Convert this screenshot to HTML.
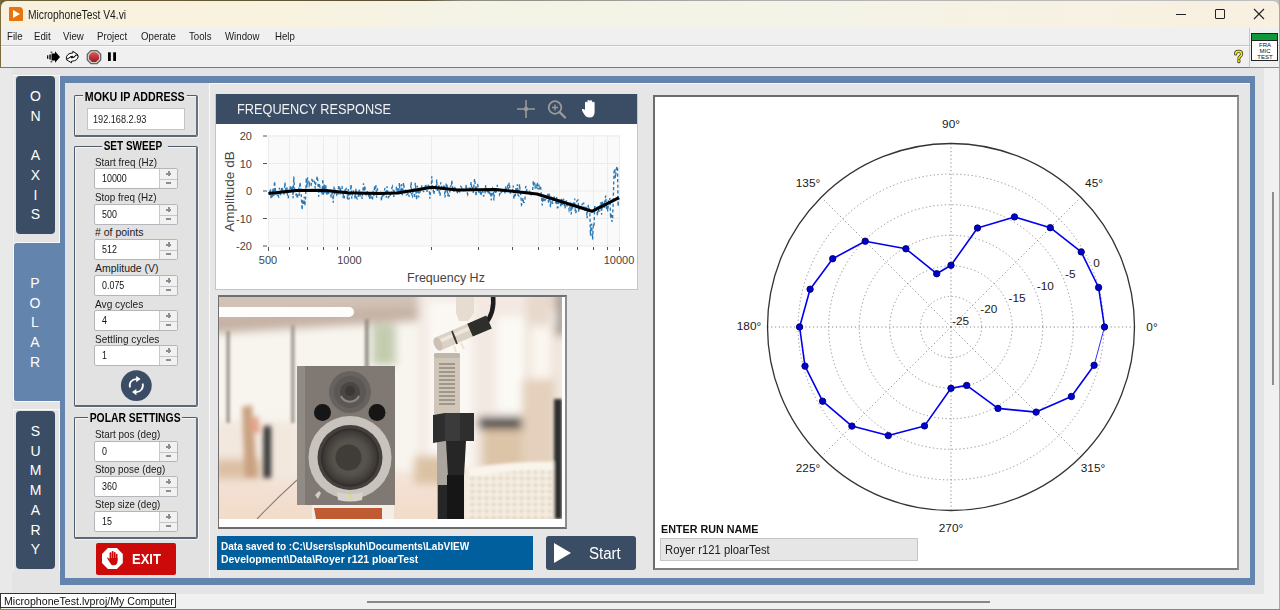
<!DOCTYPE html>
<html><head><meta charset="utf-8">
<style>
*{box-sizing:border-box;margin:0;padding:0}
html,body{width:1280px;height:610px;overflow:hidden;background:#7b6a3c;font-family:"Liberation Sans",sans-serif}
.a{position:absolute}
.tx{transform-origin:0 0}
#win{left:0;top:0;width:1280px;height:610px;background:#f0f0f0;overflow:hidden}
#title{left:1px;top:1px;width:1278px;height:27px;background:linear-gradient(90deg,#f8f1df 0%,#f9f2de 20%,#f4f3e5 34%,#f3f3e7 62%,#f6f2e3 80%,#f8f0e0 100%);border-radius:6px 6px 0 0}
#menu{left:1px;top:28px;width:1278px;height:17px;background:#f0f0f0}
.mi{position:absolute;top:30px;font-size:11.5px;transform:scaleX(0.84);transform-origin:0 0;color:#1a1a1a;white-space:nowrap}
#tb{left:1px;top:45px;width:1278px;height:22px;background:#f0f0f0;border-top:1px solid #c6c6c6;box-shadow:inset 0 1px 0 #fafafa}
#mainbg{left:0;top:67px;width:1264px;height:527px;background:linear-gradient(90deg,#e9e9e9 0,#e9e9e9 11px,#e4e4e4 13px,#e4e4e4 100%);border-top:1px solid #7a7a7a}
.tab{position:absolute;background:#3b4d64;border-radius:4px;color:#fff;font-size:14px;text-align:center;line-height:19.7px}
#frame{left:60px;top:76px;width:1195px;height:509px;background:#6384ad}
.pnl{position:absolute;background:#e6e6e6}
.gb{position:absolute;border:1px solid #4e5c6c;border-right:2px solid #66727e;border-bottom:2px solid #5c6876;border-radius:2px;box-shadow:inset 1px 1px 0 #f6f6f6,1px 1px 0 #f4f4f4}
.gbt{position:absolute;font-weight:bold;font-size:12px;color:#000;background:#e2e2e2;padding:0 2px;white-space:nowrap}
.lbl{position:absolute;font-size:10.5px;transform:scaleX(0.94);transform-origin:0 0;color:#1a1a1a;white-space:nowrap}
.num{position:absolute;width:84px;height:21px;background:#fff;border:1px solid #b4b6bc;border-radius:2px}
.num .v{position:absolute;left:6px;top:2px;font-size:11px;color:#111;transform:scaleX(0.81);margin:1px 0 0 1px;transform-origin:0 0}
.num .inc{position:absolute;left:64px;top:0;width:18px;height:19px;background:#f1f1f1;border-left:1px solid #c8c8c8}
.num .inc:before{content:"";position:absolute;left:5.5px;top:3.7px;width:5px;height:2px;background:#8e8e8e;box-shadow:0 0 0 0 #7c7c7c}
.num .inc:after{content:"";position:absolute;left:5.5px;top:13.1px;width:5px;height:2px;background:#8e8e8e}
.num .sep{position:absolute;left:65px;top:9.5px;width:17px;height:1.5px;background:#c4c6cc}
.num .vp{position:absolute;left:72.5px;top:2.2px;width:2px;height:5px;background:#8e8e8e}
svg text{font-family:"Liberation Sans",sans-serif}
</style></head><body>
<div id="win" class="a">
  <div class="a" style="left:0;top:0;width:1280px;height:30px;background:linear-gradient(90deg,#6e6036 0%,#5a5032 33%,#8c8a80 36%,#b0b0b0 60%,#c0c0c0 100%)"></div><div class="a" style="left:0;top:0;width:1px;height:610px;background:#7b6a3c"></div><div class="a" style="left:1279px;top:0;width:1px;height:610px;background:#a8a8a8"></div>
  <div id="title" class="a">
    <div class="a" style="left:8px;top:6px;width:14px;height:14px;background:#e8730f;border-radius:1px 4px 1px 1px"></div>
    <svg class="a" style="left:8px;top:6px" width="14" height="14"><path d="M4 3 L11 7 L4 11 Z" fill="#fff"/></svg>
    <div id="t_title" class="a tx" style="left:27px;top:7px;transform:scaleX(0.855);font-size:12px;color:#1a1a1a;white-space:nowrap">MicrophoneTest V4.vi</div>
    <div class="a" style="left:1175px;top:13px;width:10px;height:1px;background:#222"></div>
    <div class="a" style="left:1214px;top:8px;width:10px;height:10px;border:1px solid #222;border-radius:1px"></div>
    <svg class="a" style="left:1252px;top:7px" width="12" height="12"><path d="M1 1 L11 11 M11 1 L1 11" stroke="#222" stroke-width="1.1"/></svg>
  </div>
  <div id="menu" class="a"></div>
  <div id="t_file" class="mi tx" style="left:7px">File</div>
  <div class="mi" style="left:34px">Edit</div>
  <div class="mi" style="left:63px">View</div>
  <div class="mi" style="left:97px">Project</div>
  <div class="mi" style="left:141px">Operate</div>
  <div class="mi" style="left:189px">Tools</div>
  <div class="mi" style="left:225px">Window</div>
  <div id="t_help" class="mi tx" style="left:275px">Help</div>
  <div id="tb" class="a"></div>
  <!-- toolbar icons -->
  <svg class="a" style="left:40px;top:45px" width="85" height="23" viewBox="40 45 85 23">
    <path d="M51.5 53.5 H55 V51.3 L60 57 L55 62.8 V60.5 H51.5 Z" fill="#000"/>
    <rect x="47" y="55.3" width="1.3" height="3.5" fill="#111"/><rect x="49.3" y="54.5" width="1.5" height="5" fill="#111"/>
    <rect x="50.6" y="51.5" width="1.6" height="1.5" fill="#555"/><rect x="50.6" y="61" width="1.6" height="1.5" fill="#555"/>
    <path d="M66.3 58.5 Q66.5 53.2 72.8 53 V51.3 L77.8 54.6 L72.8 57.8 V56.2 Q69.2 56.4 68.8 59.5 Z" fill="#fff" stroke="#000" stroke-width="0.95" stroke-linejoin="round"/>
    <path d="M78.3 55.8 Q78 61 71.5 61.2 V62.8 L66.3 59.6 L71.5 56.4 V58 Q75.2 57.9 75.8 54.8 Z" fill="#fff" stroke="#000" stroke-width="0.95" stroke-linejoin="round"/>
    <defs><linearGradient id="abg" x1="0" y1="0" x2="0" y2="1"><stop offset="0" stop-color="#d4585c"/><stop offset="0.5" stop-color="#c03438"/><stop offset="1" stop-color="#9c1c20"/></linearGradient></defs>
    <path d="M91 50.6 H97 L100.7 54.3 V59.9 L97 63.6 H91 L87.3 59.9 V54.3 Z" fill="#cfcfcf" stroke="#666" stroke-width="1.3"/>
    <path d="M92 52.3 H96 L99 55.3 V58.9 L96 61.9 H92 L89 58.9 V55.3 Z" fill="url(#abg)"/>
    <rect x="108" y="52.3" width="2.8" height="8.7" fill="#000"/><rect x="113.2" y="52.3" width="2.8" height="8.7" fill="#000"/>
  </svg>
  <div class="a" style="left:1249px;top:28px;width:1px;height:40px;background:#c8c8c8"></div>
  <div class="a" style="left:1251px;top:33px;width:27px;height:28px;background:#fff;border:1px solid #222">
    <div class="a" style="left:0;top:0;width:25px;height:6.5px;background:#0c9a38;border-bottom:1px solid #222"></div>
    <div class="a" style="left:0;top:8px;width:26px;font-size:6px;line-height:6px;text-align:center;font-weight:normal;color:#111;font-family:'Liberation Sans',sans-serif">FRA<br>MIC<br>TEST</div>
  </div>
  <svg class="a" style="left:1232px;top:49px" width="13" height="15"><path d="M3.6 5 Q3.6 2.4 6.6 2.4 Q9.6 2.4 9.6 5 Q9.6 6.7 7.9 7.6 Q6.9 8.2 6.9 9.7 M6.9 11.6 V12.7" fill="none" stroke="#333" stroke-width="3.1" stroke-linecap="round"/><path d="M3.6 5 Q3.6 2.4 6.6 2.4 Q9.6 2.4 9.6 5 Q9.6 6.7 7.9 7.6 Q6.9 8.2 6.9 9.7 M6.9 11.6 V12.7" fill="none" stroke="#f4ec00" stroke-width="1.6" stroke-linecap="round"/></svg>

  <div id="mainbg" class="a"></div>
  <div class="a" style="left:1264px;top:68px;width:15px;height:527px;background:#f0f0f0"></div><div class="a" style="left:1249px;top:67px;width:30px;height:1px;background:#8a8a8a"></div>
  <div class="a" style="left:1272px;top:192px;width:1.5px;height:193px;background:#8e8e8e"></div>
  <div class="a" style="left:1px;top:594px;width:1278px;height:15px;background:#f0f0f0"></div><div class="a" style="left:0;top:609px;width:1280px;height:1px;background:#8c8878"></div>
  <div class="a" style="left:367px;top:601px;width:623px;height:2px;background:#888"></div>

  <!-- tabs -->
  <div class="a" style="left:13px;top:75px;width:47px;height:167px;border:1px solid #f8f8f8;border-bottom:none;border-left-color:#f2f2f2"></div>
  <div id="t_tab1" class="tab tx" style="left:16px;top:76px;width:39px;height:158px;padding-top:11px">O<br>N<br>&nbsp;<br>A<br>X<br>I<br>S</div>
  <div class="a" style="left:13px;top:242px;width:52px;height:160px;background:#f8f8f8;border-radius:4px 0 0 3px"></div>
  <div id="t_tab2" class="tab tx" style="left:14px;top:243px;width:51px;height:158px;background:#6384ad;border-radius:3px 0 0 2px;padding-top:31px;padding-right:9px">P<br>O<br>L<br>A<br>R</div>
  <div class="a" style="left:13px;top:409px;width:47px;height:162px;border:1px solid #f8f8f8;border-bottom:none;border-left-color:#f2f2f2"></div>
  <div id="t_tab3" class="tab tx" style="left:16px;top:411px;width:39px;height:158px;padding-top:11px">S<br>U<br>M<br>M<br>A<br>R<br>Y</div>

  <!-- blue frame -->
  <div id="frame" class="a"></div>
  <div class="pnl" style="left:65px;top:83px;width:1185px;height:495px;background:#e6e6e6;border-top:1px solid #f6f6f6;border-left:1px solid #f6f6f6"></div>
  <!-- left panel -->
  <div class="pnl" style="left:65px;top:83px;width:145px;height:495px;background:#e2e2e2;border-right:1px solid #fafafa"></div>

  <div class="gb" style="left:74px;top:95px;width:124px;height:42px"></div>
  <div id="t_moku" class="gbt tx" style="left:83px;top:90px;transform:scaleX(0.887)">MOKU IP ADDRESS</div>
  <div class="a" style="left:87px;top:108px;width:98px;height:22px;background:#fff;border:1px solid #c4c4c4"></div>
  <div id="t_ip" class="lbl tx" style="left:93px;top:114px;font-size:10px;transform:scaleX(0.914)">192.168.2.93</div>

  <div class="gb" style="left:74px;top:146px;width:124px;height:261px"></div>
  <div id="t_sweep" class="gbt tx" style="left:102px;top:139px;transform:scaleX(0.834);padding-right:7px">SET SWEEP</div>

  <div id="t_startf" class="lbl tx" style="left:95px;top:156px">Start freq (Hz)</div>
  <div class="num" style="left:94px;top:168px"><div id="t_10000" class="v tx">10000</div><div class="inc"></div><div class="sep"></div><div class="vp"></div></div>
  <div id="l_stopf" class="lbl tx" style="left:95px;top:191px">Stop freq (Hz)</div>
  <div class="num" style="left:94px;top:204px"><div class="v">500</div><div class="inc"></div><div class="sep"></div><div class="vp"></div></div>
  <div id="l_pts" class="lbl tx" style="left:95px;top:226px;transform:scaleX(1.0)"># of points</div>
  <div class="num" style="left:94px;top:239px"><div class="v">512</div><div class="inc"></div><div class="sep"></div><div class="vp"></div></div>
  <div id="l_amp" class="lbl tx" style="left:95px;top:262px;transform:scaleX(1.0)">Amplitude (V)</div>
  <div class="num" style="left:94px;top:275px"><div class="v">0.075</div><div class="inc"></div><div class="sep"></div><div class="vp"></div></div>
  <div id="l_avg" class="lbl tx" style="left:95px;top:298px;transform:scaleX(0.964)">Avg cycles</div>
  <div class="num" style="left:94px;top:310px"><div class="v">4</div><div class="inc"></div><div class="sep"></div><div class="vp"></div></div>
  <div id="l_set" class="lbl tx" style="left:95px;top:333px;transform:scaleX(0.958)">Settling cycles</div>
  <div class="num" style="left:94px;top:345px"><div class="v">1</div><div class="inc"></div><div class="sep"></div><div class="vp"></div></div>

  <svg class="a" style="left:120px;top:369px" width="33" height="33">
    <circle cx="16.3" cy="16.6" r="15.4" fill="#3b4d64"/>
    <path d="M10 18.6 A6.5 6.5 0 0 1 16.6 10.1" fill="none" stroke="#fff" stroke-width="1.7"/>
    <path d="M16.2 7 L20.6 10.1 L16.2 13.2 Z" fill="#fff"/>
    <path d="M22.6 14.6 A6.5 6.5 0 0 1 16 23.1" fill="none" stroke="#fff" stroke-width="1.7"/>
    <path d="M16.4 20 L12 23.1 L16.4 26.2 Z" fill="#fff"/>
  </svg>

  <div class="gb" style="left:74px;top:417px;width:124px;height:122px"></div>
  <div id="t_polar" class="gbt tx" style="left:88px;top:411px;transform:scaleX(0.862)">POLAR SETTINGS</div>
  <div id="l_spos" class="lbl tx" style="left:95px;top:428px">Start pos (deg)</div>
  <div class="num" style="left:94px;top:441px"><div class="v">0</div><div class="inc"></div><div class="sep"></div><div class="vp"></div></div>
  <div id="l_stpos" class="lbl tx" style="left:95px;top:463px">Stop pose (deg)</div>
  <div class="num" style="left:94px;top:476px"><div class="v">360</div><div class="inc"></div><div class="sep"></div><div class="vp"></div></div>
  <div id="l_step" class="lbl tx" style="left:95px;top:498px;transform:scaleX(0.924)">Step size (deg)</div>
  <div class="num" style="left:94px;top:511px"><div class="v">15</div><div class="inc"></div><div class="sep"></div><div class="vp"></div></div>

  <div class="a" style="left:96px;top:543px;width:80px;height:32px;background:#cc0a0a;border-radius:2px"></div>
  <svg class="a" style="left:101px;top:547px" width="23" height="23">
    <path d="M6.9 1 H15.9 L21.8 6.9 V16 L15.9 22 H6.9 L1 16 V6.9 Z" fill="#fff"/>
    <g fill="#cc0a0a">
      <rect x="8.6" y="5.3" width="1.8" height="8" rx="0.9"/>
      <rect x="10.7" y="3.9" width="1.8" height="9" rx="0.9"/>
      <rect x="12.8" y="4.9" width="1.8" height="8" rx="0.9"/>
      <rect x="14.8" y="6.8" width="1.7" height="7" rx="0.85"/>
      <path d="M8.6 11 H16.5 V14.5 Q16.5 18.2 12.6 18.2 Q9.8 18.2 8.8 15.5 L6.2 11.3 Q6 10.3 7 10.6 L8.6 12.6 Z"/>
    </g>
  </svg>
  <div id="t_exit" class="a tx" style="left:132px;top:551px;font-size:14px;transform:scaleX(0.93);font-weight:bold;color:#fff">EXIT</div>

  <!-- frequency response chart -->
  <div class="a" style="left:215px;top:94px;width:423px;height:196px;background:#fff;border:1px solid #c4c4c8"></div>
  <div class="a" style="left:216px;top:94px;width:421px;height:30px;background:#3b4d64"></div>
  <div id="t_freq" class="a tx" style="left:237px;top:101px;font-size:14px;transform:scaleX(0.91);color:#f2f2f2;white-space:nowrap">FREQUENCY RESPONSE</div>
  <svg class="a" style="left:515px;top:98px" width="85" height="22">
    <path d="M2 11 H20 M11 2 V20" stroke="#9a9a9a" stroke-width="1.6"/>
    <circle cx="11" cy="11" r="2.2" fill="#9a9a9a"/>
    <circle cx="40" cy="9.5" r="6.3" fill="none" stroke="#9a9a9a" stroke-width="1.8"/>
    <path d="M37 9.5 H43 M40 6.5 V12.5" stroke="#9a9a9a" stroke-width="1.4"/>
    <path d="M44.5 14 L50 19.5" stroke="#9a9a9a" stroke-width="2.4" stroke-linecap="round"/>
    <path d="M70 12 V5 a1.2 1.2 0 0 1 2.4 0 V10 V3.2 a1.2 1.2 0 0 1 2.4 0 V10 V3.5 a1.2 1.2 0 0 1 2.4 0 V10 V5 a1.2 1.2 0 0 1 2.4 0 V14 Q79.5 19.5 74.5 19.5 Q71 19.5 69 16 L67 12.5 a1.2 1.2 0 0 1 2 -1.2 Z" fill="#fff"/>
  </svg>
  <svg class="a" style="left:0;top:0" width="1280" height="610" font-size="11">
    <rect x="268" y="135" width="351.29999999999995" height="111" fill="#fafafa"/>
<line x1="268" y1="136.0" x2="619.3" y2="136.0" stroke="#ececec" stroke-width="1"/>
<line x1="263" y1="136.0" x2="267" y2="136.0" stroke="#555" stroke-width="1"/>
<line x1="268" y1="163.5" x2="619.3" y2="163.5" stroke="#ececec" stroke-width="1"/>
<line x1="263" y1="163.5" x2="267" y2="163.5" stroke="#555" stroke-width="1"/>
<line x1="268" y1="191.0" x2="619.3" y2="191.0" stroke="#ececec" stroke-width="1"/>
<line x1="263" y1="191.0" x2="267" y2="191.0" stroke="#555" stroke-width="1"/>
<line x1="268" y1="218.5" x2="619.3" y2="218.5" stroke="#ececec" stroke-width="1"/>
<line x1="263" y1="218.5" x2="267" y2="218.5" stroke="#555" stroke-width="1"/>
<line x1="268" y1="246.0" x2="619.3" y2="246.0" stroke="#ececec" stroke-width="1"/>
<line x1="263" y1="246.0" x2="267" y2="246.0" stroke="#555" stroke-width="1"/>
<line x1="268.5" y1="135" x2="268.5" y2="246" stroke="#ececec" stroke-width="1"/>
<line x1="268.5" y1="247" x2="268.5" y2="251" stroke="#555" stroke-width="1"/>
<line x1="289.5" y1="135" x2="289.5" y2="246" stroke="#ececec" stroke-width="1"/>
<line x1="289.5" y1="247" x2="289.5" y2="250" stroke="#555" stroke-width="1"/>
<line x1="307.5" y1="135" x2="307.5" y2="246" stroke="#ececec" stroke-width="1"/>
<line x1="307.5" y1="247" x2="307.5" y2="250" stroke="#555" stroke-width="1"/>
<line x1="323.5" y1="135" x2="323.5" y2="246" stroke="#ececec" stroke-width="1"/>
<line x1="323.5" y1="247" x2="323.5" y2="250" stroke="#555" stroke-width="1"/>
<line x1="337.5" y1="135" x2="337.5" y2="246" stroke="#ececec" stroke-width="1"/>
<line x1="337.5" y1="247" x2="337.5" y2="250" stroke="#555" stroke-width="1"/>
<line x1="349.5" y1="135" x2="349.5" y2="246" stroke="#ececec" stroke-width="1"/>
<line x1="349.5" y1="247" x2="349.5" y2="251" stroke="#555" stroke-width="1"/>
<line x1="431.5" y1="135" x2="431.5" y2="246" stroke="#ececec" stroke-width="1"/>
<line x1="431.5" y1="247" x2="431.5" y2="250" stroke="#555" stroke-width="1"/>
<line x1="478.5" y1="135" x2="478.5" y2="246" stroke="#ececec" stroke-width="1"/>
<line x1="478.5" y1="247" x2="478.5" y2="250" stroke="#555" stroke-width="1"/>
<line x1="512.5" y1="135" x2="512.5" y2="246" stroke="#ececec" stroke-width="1"/>
<line x1="512.5" y1="247" x2="512.5" y2="250" stroke="#555" stroke-width="1"/>
<line x1="538.5" y1="135" x2="538.5" y2="246" stroke="#ececec" stroke-width="1"/>
<line x1="538.5" y1="247" x2="538.5" y2="250" stroke="#555" stroke-width="1"/>
<line x1="559.5" y1="135" x2="559.5" y2="246" stroke="#ececec" stroke-width="1"/>
<line x1="559.5" y1="247" x2="559.5" y2="250" stroke="#555" stroke-width="1"/>
<line x1="577.5" y1="135" x2="577.5" y2="246" stroke="#ececec" stroke-width="1"/>
<line x1="577.5" y1="247" x2="577.5" y2="250" stroke="#555" stroke-width="1"/>
<line x1="593.5" y1="135" x2="593.5" y2="246" stroke="#ececec" stroke-width="1"/>
<line x1="593.5" y1="247" x2="593.5" y2="250" stroke="#555" stroke-width="1"/>
<line x1="607.5" y1="135" x2="607.5" y2="246" stroke="#ececec" stroke-width="1"/>
<line x1="607.5" y1="247" x2="607.5" y2="250" stroke="#555" stroke-width="1"/>
<line x1="619.5" y1="135" x2="619.5" y2="246" stroke="#ececec" stroke-width="1"/>
<line x1="619.5" y1="247" x2="619.5" y2="251" stroke="#555" stroke-width="1"/>
<path d="M269.0,193.6 L269.7,191.5 L270.4,188.8 L271.1,198.9 L271.8,198.0 L272.4,195.1 L273.1,188.1 L273.8,196.2 L274.5,181.3 L275.2,187.8 L275.9,193.8 L276.6,193.1 L277.3,194.8 L278.0,193.9 L278.7,197.7 L279.3,187.8 L280.0,190.5 L280.7,195.4 L281.4,187.8 L282.1,192.8 L282.8,189.1 L283.5,189.9 L284.2,195.2 L284.9,182.4 L285.6,189.1 L286.2,193.5 L286.9,187.4 L287.6,196.6 L288.3,198.3 L289.0,188.5 L289.7,192.2 L290.4,186.0 L291.1,185.6 L291.8,191.3 L292.5,185.3 L293.1,198.3 L293.8,176.5 L294.5,190.3 L295.2,188.3 L295.9,195.5 L296.6,192.6 L297.3,198.7 L298.0,194.0 L298.7,187.1 L299.4,195.8 L300.0,182.2 L300.7,187.8 L301.4,197.5 L302.1,209.9 L302.8,199.4 L303.5,205.2 L304.2,196.7 L304.9,205.7 L305.6,196.6 L306.3,177.9 L306.9,187.5 L307.6,177.2 L308.3,183.5 L309.0,185.8 L309.7,183.2 L310.4,185.7 L311.1,185.6 L311.8,180.1 L312.5,181.1 L313.2,179.1 L313.8,181.2 L314.5,181.4 L315.2,188.4 L315.9,181.5 L316.6,179.4 L317.3,176.2 L318.0,183.2 L318.7,196.6 L319.4,183.2 L320.1,188.8 L320.7,188.9 L321.4,192.9 L322.1,194.9 L322.8,179.0 L323.5,194.9 L324.2,184.3 L324.9,193.3 L325.6,184.2 L326.3,191.3 L327.0,195.7 L327.6,190.1 L328.3,191.6 L329.0,194.2 L329.7,191.5 L330.4,190.6 L331.1,197.5 L331.8,195.5 L332.5,190.0 L333.2,202.8 L333.9,186.5 L334.5,195.2 L335.2,190.3 L335.9,192.1 L336.6,194.6 L337.3,192.6 L338.0,194.4 L338.7,185.4 L339.4,185.5 L340.1,194.5 L340.8,188.0 L341.4,187.8 L342.1,186.0 L342.8,197.5 L343.5,195.4 L344.2,198.5 L344.9,188.5 L345.6,192.5 L346.3,187.8 L347.0,195.8 L347.7,199.4 L348.3,189.0 L349.0,199.3 L349.7,196.9 L350.4,192.0 L351.1,184.5 L351.8,198.7 L352.5,192.4 L353.2,190.3 L353.9,194.5 L354.6,194.6 L355.2,199.2 L355.9,188.6 L356.6,197.7 L357.3,199.2 L358.0,199.0 L358.7,192.2 L359.4,189.8 L360.1,197.3 L360.8,193.5 L361.5,193.5 L362.1,199.0 L362.8,191.9 L363.5,183.4 L364.2,191.4 L364.9,185.3 L365.6,196.5 L366.3,194.5 L367.0,190.6 L367.7,193.1 L368.4,196.7 L369.0,193.5 L369.7,198.8 L370.4,193.0 L371.1,197.6 L371.8,199.5 L372.5,200.0 L373.2,190.5 L373.9,197.0 L374.6,185.4 L375.3,188.8 L375.9,185.1 L376.6,197.8 L377.3,188.2 L378.0,193.3 L378.7,192.6 L379.4,193.3 L380.1,190.9 L380.8,194.3 L381.5,200.9 L382.2,193.5 L382.8,195.5 L383.5,197.5 L384.2,192.5 L384.9,188.0 L385.6,190.9 L386.3,197.7 L387.0,186.3 L387.7,190.7 L388.4,197.4 L389.1,196.5 L389.7,193.2 L390.4,196.5 L391.1,193.8 L391.8,188.2 L392.5,186.5 L393.2,190.4 L393.9,197.0 L394.6,190.7 L395.3,189.3 L396.0,189.8 L396.6,186.6 L397.3,192.5 L398.0,188.0 L398.7,194.3 L399.4,182.8 L400.1,194.0 L400.8,189.8 L401.5,184.2 L402.2,195.3 L402.9,191.0 L403.5,182.6 L404.2,188.2 L404.9,193.0 L405.6,189.7 L406.3,194.8 L407.0,194.6 L407.7,194.1 L408.4,192.6 L409.1,196.7 L409.8,193.7 L410.4,192.7 L411.1,182.0 L411.8,194.4 L412.5,196.0 L413.2,189.1 L413.9,188.3 L414.6,198.3 L415.3,182.6 L416.0,191.9 L416.7,200.0 L417.3,185.8 L418.0,192.4 L418.7,197.4 L419.4,188.8 L420.1,191.6 L420.8,192.9 L421.5,185.2 L422.2,188.5 L422.9,190.0 L423.6,192.1 L424.2,188.4 L424.9,187.6 L425.6,184.0 L426.3,186.6 L427.0,191.8 L427.7,188.4 L428.4,184.2 L429.1,184.2 L429.8,198.8 L430.5,192.2 L431.1,190.0 L431.8,176.3 L432.5,189.9 L433.2,189.4 L433.9,194.5 L434.6,189.3 L435.3,187.3 L436.0,189.8 L436.7,179.5 L437.4,192.1 L438.0,189.2 L438.7,185.0 L439.4,193.6 L440.1,195.7 L440.8,182.3 L441.5,185.4 L442.2,189.5 L442.9,189.2 L443.6,186.8 L444.3,184.4 L444.9,197.5 L445.6,193.0 L446.3,183.7 L447.0,183.2 L447.7,196.1 L448.4,193.1 L449.1,196.7 L449.8,192.5 L450.5,185.5 L451.2,190.4 L451.8,180.3 L452.5,186.3 L453.2,189.3 L453.9,191.8 L454.6,186.6 L455.3,189.2 L456.0,191.7 L456.7,191.5 L457.4,192.6 L458.1,190.9 L458.7,188.6 L459.4,193.3 L460.1,190.2 L460.8,186.5 L461.5,187.3 L462.2,189.9 L462.9,189.5 L463.6,190.6 L464.3,189.9 L465.0,190.6 L465.6,189.3 L466.3,184.6 L467.0,191.6 L467.7,194.3 L468.4,191.7 L469.1,189.1 L469.8,191.7 L470.5,185.8 L471.2,181.9 L471.9,190.1 L472.5,185.9 L473.2,192.9 L473.9,185.2 L474.6,178.7 L475.3,185.4 L476.0,196.4 L476.7,188.1 L477.4,184.0 L478.1,186.5 L478.8,191.9 L479.4,191.8 L480.1,190.4 L480.8,195.9 L481.5,192.7 L482.2,189.6 L482.9,192.2 L483.6,196.6 L484.3,193.7 L485.0,193.9 L485.7,185.1 L486.3,189.0 L487.0,192.7 L487.7,188.4 L488.4,194.1 L489.1,192.1 L489.8,193.4 L490.5,188.7 L491.2,200.3 L491.9,194.8 L492.6,188.6 L493.2,189.9 L493.9,200.4 L494.6,188.1 L495.3,193.2 L496.0,193.7 L496.7,189.6 L497.4,184.8 L498.1,190.5 L498.8,191.3 L499.5,194.7 L500.1,193.3 L500.8,190.2 L501.5,193.7 L502.2,192.5 L502.9,191.2 L503.6,190.6 L504.3,189.4 L505.0,193.4 L505.7,186.2 L506.4,188.0 L507.0,190.8 L507.7,184.7 L508.4,189.1 L509.1,182.5 L509.8,188.2 L510.5,193.5 L511.2,193.6 L511.9,191.0 L512.6,190.4 L513.3,185.5 L513.9,199.2 L514.6,193.7 L515.3,196.2 L516.0,188.0 L516.7,191.0 L517.4,184.2 L518.1,195.2 L518.8,195.9 L519.5,184.1 L520.2,191.9 L520.8,194.9 L521.5,204.9 L522.2,203.7 L522.9,198.0 L523.6,202.4 L524.3,202.2 L525.0,198.6 L525.7,186.1 L526.4,187.6 L527.1,192.8 L527.8,192.2 L528.4,191.8 L529.1,192.9 L529.8,190.0 L530.5,196.2 L531.2,194.9 L531.9,193.1 L532.6,190.7 L533.3,180.8 L534.0,186.5 L534.7,182.5 L535.3,188.7 L536.0,184.3 L536.7,188.3 L537.4,182.7 L538.1,189.5 L538.8,184.5 L539.5,189.5 L540.2,185.5 L540.9,189.0 L541.6,198.0 L542.2,205.5 L542.9,197.2 L543.6,201.5 L544.3,199.5 L545.0,200.5 L545.7,198.9 L546.4,196.3 L547.1,199.3 L547.8,192.9 L548.5,202.6 L549.1,193.5 L549.8,199.1 L550.5,207.2 L551.2,197.5 L551.9,198.8 L552.6,203.8 L553.3,199.2 L554.0,195.9 L554.7,200.6 L555.4,202.2 L556.0,203.0 L556.7,197.0 L557.4,207.8 L558.1,207.6 L558.8,200.9 L559.5,202.2 L560.2,199.5 L560.9,207.4 L561.6,198.8 L562.3,204.8 L562.9,200.1 L563.6,199.5 L564.3,205.6 L565.0,208.4 L565.7,203.0 L566.4,200.4 L567.1,206.9 L567.8,203.5 L568.5,205.2 L569.2,210.5 L569.8,209.1 L570.5,202.4 L571.2,214.4 L571.9,205.0 L572.6,208.5 L573.3,202.7 L574.0,205.4 L574.7,198.5 L575.4,213.6 L576.1,212.0 L576.7,201.4 L577.4,200.4 L578.1,200.1 L578.8,212.1 L579.5,205.4 L580.2,207.3 L580.9,206.5 L581.6,207.5 L582.3,203.7 L583.0,208.6 L583.6,202.6 L584.3,208.6 L585.0,211.6 L585.7,206.1 L586.4,209.0 L587.1,218.3 L587.8,208.3 L588.5,204.9 L589.2,209.7 L589.9,214.2 L590.5,235.8 L591.2,223.7 L591.9,229.5 L592.6,239.5 L593.3,225.7 L594.0,227.0 L594.7,206.0 L595.4,210.6 L596.1,206.8 L596.8,209.8 L597.4,215.9 L598.1,206.2 L598.8,211.1 L599.5,211.1 L600.2,204.2 L600.9,202.3 L601.6,214.7 L602.3,200.6 L603.0,206.3 L603.7,203.2 L604.3,207.9 L605.0,199.7 L605.7,195.6 L606.4,209.6 L607.1,206.1 L607.8,211.4 L608.5,201.4 L609.2,202.4 L609.9,198.1 L610.6,218.3 L611.2,213.3 L611.9,221.8 L612.6,219.1 L613.3,198.7 L614.0,172.6 L614.7,168.6 L615.4,178.1 L616.1,170.9 L616.8,166.3 L617.5,167.7 L618.1,206.4 L618.8,198.2" fill="none" stroke="#2a78b4" stroke-width="1.35" stroke-dasharray="3.2,2.4"/>
<path d="M268.5,193.4 L296.0,190.5 L323.6,190.3 L347.7,192.7 L378.7,193.4 L397.6,193.0 L432.0,187.2 L457.8,190.0 L495.7,189.5 L537.0,194.0 L592.0,211.3 L619.0,197.6" fill="none" stroke="#000" stroke-width="3" stroke-linejoin="round"/>
    <g fill="#444" font-size="11">
      <text x="252" y="140" text-anchor="end">20</text>
      <text x="252" y="168" text-anchor="end">10</text>
      <text x="252" y="195" text-anchor="end">0</text>
      <text x="252" y="223" text-anchor="end">-10</text>
      <text x="252" y="250" text-anchor="end">-20</text>
      <text x="268" y="264" text-anchor="middle">500</text>
      <text x="349.5" y="264" text-anchor="middle">1000</text>
      <text x="619" y="264" text-anchor="middle">10000</text>
      <text x="446" y="282" text-anchor="middle" font-size="12.5">Frequency Hz</text>
      <text x="233.5" y="191.5" text-anchor="middle" font-size="13.5" transform="rotate(-90 233.5 191.5)">Amplitude dB</text>
    </g>
  </svg>

  <!-- photo -->
  <div class="a" style="left:218px;top:295px;width:349px;height:234px;background:#fff;border:2px solid #707070;border-left-width:1px;border-right-color:#8c8c8c;border-bottom-color:#6c6c6c"></div>
  <svg class="a" style="left:219px;top:297px" width="343" height="222" viewBox="219 296 343 222">
<defs>
<filter id="bl4" x="-20%" y="-20%" width="140%" height="140%"><feGaussianBlur stdDeviation="4"/></filter>
<filter id="bl3" x="-20%" y="-20%" width="140%" height="140%"><feGaussianBlur stdDeviation="2.5"/></filter>
<filter id="bl2" x="-20%" y="-20%" width="140%" height="140%"><feGaussianBlur stdDeviation="1.4"/></filter>
<filter id="bl1" x="-20%" y="-20%" width="140%" height="140%"><feGaussianBlur stdDeviation="0.7"/></filter>
<linearGradient id="floor" x1="0" y1="0" x2="0" y2="1"><stop offset="0" stop-color="#f4e4d8"/><stop offset="1" stop-color="#f2d9c6"/></linearGradient>
<radialGradient id="cone" cx="0.5" cy="0.5" r="0.5"><stop offset="0" stop-color="#5a5651"/><stop offset="0.6" stop-color="#56514c"/><stop offset="0.9" stop-color="#3e3a37"/><stop offset="1" stop-color="#2c2926"/></radialGradient>
<pattern id="grill" width="7" height="6.5" patternUnits="userSpaceOnUse"><rect width="7" height="6.5" fill="#f7f1e6"/><rect x="1.5" y="1.5" width="4" height="3" fill="#d9cbb5"/></pattern>
</defs>
<rect x="219" y="296" width="343" height="222" fill="#f1e8e0"/>
<g filter="url(#bl4)">
  <!-- ceiling -->
  <path d="M205 285 H440 V318 L205 333 Z" fill="#d2c2b6"/>
  <path d="M205 314 L440 304 L440 319 L205 333 Z" fill="#c6b3a5"/>
  <!-- windows left -->
  <path d="M210 335 L425 320 V470 H210 Z" fill="#f8f5ef"/>
  <rect x="372" y="324" width="24" height="40" fill="#c2ccae"/>
  <!-- right bright wall -->
  <rect x="418" y="285" width="160" height="190" fill="#f3e9e2"/>
  <rect x="428" y="300" width="44" height="175" fill="#fbf8f4"/>
  <rect x="497" y="316" width="28" height="95" fill="#fcfaf5"/>
  <rect x="526" y="290" width="30" height="195" fill="#e8d9cc"/>
  <rect x="530" y="325" width="22" height="60" fill="#faf6f0"/>
  <rect x="552" y="310" width="10" height="14" fill="#fdfdfd"/>
  <rect x="556" y="290" width="10" height="45" fill="#9c948c"/>
  <!-- floor -->
  <rect x="205" y="470" width="370" height="60" fill="url(#floor)"/>
  <!-- left cabinet and objects -->
  <rect x="210" y="420" width="90" height="58" fill="#f3e8de"/>
  <rect x="214" y="458" width="48" height="20" fill="#dcc0a4"/>
  <!-- boxes right -->
  <rect x="482" y="428" width="50" height="52" fill="#dcc4a8"/>
  <rect x="478" y="416" width="55" height="12" fill="#403e3d"/>
  <rect x="522" y="378" width="32" height="102" fill="#e4d0bc"/>
  <rect x="414" y="455" width="42" height="28" fill="#dcc2a4"/>
</g>
<g filter="url(#bl2)">
  <rect x="226.5" y="330" width="3.2" height="92" fill="#968e84"/>
  <rect x="291" y="324" width="3.6" height="98" fill="#a39b92"/>
  <rect x="365" y="318" width="3.6" height="104" fill="#8f8a80"/>
</g>
<!-- fluorescent light -->
<g filter="url(#bl1)">
  <rect x="212" y="306" width="142" height="10" rx="5" fill="#fefdfb"/>
</g>
<g filter="url(#bl3)">
  <path d="M242 406 L252 404 L257 476 L245 476 Z" fill="#c9a282"/>
  <path d="M250 420 L258 414 L260 432 L252 432 Z" fill="#e4a48c"/>
  <rect x="263.5" y="425" width="7.5" height="52" fill="#333130"/>
</g>
<!-- cable diagonal -->
<path d="M297 479 Q276 498 257 518" stroke="#8a837c" stroke-width="1.1" fill="none" filter="url(#bl1)"/>
<!-- speaker -->
<g filter="url(#bl1)">
  <rect x="297" y="365" width="98" height="139" fill="#807973"/>
  <rect x="297" y="365" width="8" height="139" fill="#918b86"/>
  <circle cx="350" cy="391" r="21" fill="#66625e"/>
  <circle cx="350" cy="391" r="16" fill="#5c5854"/>
  <circle cx="350" cy="391" r="10" fill="#4a4643"/>
  <path d="M341 395 A10 10 0 0 0 359 395" stroke="#8e8985" stroke-width="2" fill="none"/>
  <circle cx="350" cy="390" r="5" fill="#3c3936"/>
  <circle cx="322.5" cy="411.5" r="8.5" fill="#121212"/>
  <circle cx="377" cy="411.5" r="8.5" fill="#121212"/>
  <circle cx="350" cy="456.5" r="41.5" fill="#c9c3bd"/>
  <circle cx="350" cy="456.5" r="32.5" fill="#45413d"/>
  <circle cx="350" cy="456.5" r="29" fill="url(#cone)"/>
  <circle cx="348.5" cy="456.5" r="13" fill="#403c38"/>
  <path d="M337 491 Q350 495 363 491 L362 499 Q350 502 338 499 Z" fill="#d8d2cc"/>
  <path d="M315 494 l4 -4 l2 2 l-3 6 Z" fill="#d0ccc8"/>
  <circle cx="350.5" cy="495" r="2" fill="#d0e468"/>
  <path d="M312 504 H394 V518 H312 Z" fill="#f4eee8"/>
  <path d="M314 507 H382 V518 H316 Z" fill="#c05a32"/>
</g>
<!-- chair -->
<g filter="url(#bl2)">
  <path d="M464 470 Q510 461 558 463 L558 518 L464 518 Z" fill="url(#grill)"/>
  <path d="M464 468 Q510 459 558 461 L558 470 Q510 468 464 476 Z" fill="#faf5ec"/>
  <rect x="464" y="468" width="5" height="50" fill="#f4ede2"/>
  <rect x="554" y="398" width="8" height="120" fill="#2e2e2e"/>
</g>
<!-- top mic -->
<g filter="url(#bl1)">
  <path d="M456 294 H474 V312 L468 320 H459 L456 312 Z" fill="#e6dccf"/>
  <path d="M493 294 Q495 312 485 323" stroke="#1e1e1e" stroke-width="4.5" fill="none"/>
  <path d="M435.2 336.6 L467.2 322.8 L472.8 335.6 L440.8 349.4 Z" fill="#dbd2c5"/>
  <path d="M436.5 339.5 L468.5 325.7 L470 329 L438 342.8 Z" fill="#eee7dc"/>
  <ellipse cx="438" cy="343" rx="4" ry="7" transform="rotate(-23 438 343)" fill="#cbc2b5"/>
  <path d="M452 330 L455 337 L457 343 L454 336 Z" stroke="#3a3836" stroke-width="1.6"/>
  <path d="M467.2 322.8 L486.2 314.6 L491.8 327.4 L472.8 335.6 Z" fill="#2f2d2b"/>
  <path d="M454 345 l2 6 M461 342 l3 6" stroke="#ece4d8" stroke-width="2"/>
  <!-- ribbon mic body -->
  <rect x="434" y="352" width="26" height="62" rx="2" fill="#d0c7ba"/>
  <rect x="434" y="352" width="26" height="5" rx="2" fill="#c0b7ab"/>
  <g fill="#a0978b">
    <rect x="439" y="362" width="16" height="2"/><rect x="439" y="366" width="16" height="2"/><rect x="439" y="370" width="16" height="2"/>
    <rect x="439" y="374" width="16" height="2"/><rect x="439" y="378" width="16" height="2"/><rect x="439" y="382" width="16" height="2"/>
    <rect x="439" y="386" width="16" height="2"/><rect x="439" y="390" width="16" height="2"/><rect x="439" y="394" width="16" height="2"/>
    <rect x="439" y="398" width="16" height="2"/><rect x="439" y="402" width="16" height="2"/>
  </g>
  <rect x="437" y="414" width="11" height="104" fill="#aaa59e"/>
  <rect x="438" y="484" width="9" height="34" fill="#262626"/>
  <!-- clip -->
  <path d="M433 414 L445 412 L474 412 L474 440 L445 440 L433 442 Z" fill="#2e2e2e"/>
  <path d="M445 412 L460 412 L460 440 L445 440 Z" fill="#3a3a3a"/>
  <path d="M446 440 H466 L464 475 H448 Z" fill="#262626"/>
  <rect x="447" y="474" width="17" height="44" fill="#171717"/>
</g>
</svg>


  <!-- status -->
  <div class="a" style="left:217px;top:536px;width:316px;height:34px;background:#005f9c"></div>
  <div id="t_st1" class="a tx" style="left:221px;top:540px;transform:scaleX(0.91);font-size:11px;font-weight:bold;color:#fff;white-space:nowrap">Data saved to :C:\Users\spkuh\Documents\LabVIEW</div><div id="t_st2" class="a tx" style="left:221px;top:553px;transform:scaleX(0.95);font-size:11px;font-weight:bold;color:#fff;white-space:nowrap">Development\Data\Royer r121 ploarTest</div>
  <div class="a" style="left:546px;top:536px;width:90px;height:34px;background:#3b4d64;border-radius:3px"></div>
  <svg class="a" style="left:553px;top:542px" width="20" height="22"><path d="M1 1 L18 11 L1 21 Z" fill="#fff"/></svg>
  <div id="t_start" class="a tx" style="left:589px;top:545px;font-size:16px;transform:scaleX(0.94);color:#fff">Start</div>

  <!-- polar panel -->
  <div class="a" style="left:653px;top:95px;width:586px;height:475px;background:#fff;border:2px solid #6c6c6c;border-right-color:#8e8e8e;border-bottom-color:#7e7e7e"></div>
  <svg class="a" style="left:0;top:0" width="1280" height="610" font-size="11.8" fill="#1a1a1a">
    <circle cx="951" cy="327" r="30.58" fill="none" stroke="#8c8c8c" stroke-width="1" stroke-dasharray="1.2,2.6"/>
<circle cx="951" cy="327" r="61.17" fill="none" stroke="#8c8c8c" stroke-width="1" stroke-dasharray="1.2,2.6"/>
<circle cx="951" cy="327" r="91.75" fill="none" stroke="#8c8c8c" stroke-width="1" stroke-dasharray="1.2,2.6"/>
<circle cx="951" cy="327" r="122.33" fill="none" stroke="#8c8c8c" stroke-width="1" stroke-dasharray="1.2,2.6"/>
<circle cx="951" cy="327" r="152.92" fill="none" stroke="#8c8c8c" stroke-width="1" stroke-dasharray="1.2,2.6"/>
<line x1="951" y1="327" x2="1134.50" y2="327.00" stroke="#8c8c8c" stroke-width="1" stroke-dasharray="1.2,2.6"/>
<line x1="951" y1="327" x2="1080.75" y2="197.25" stroke="#8c8c8c" stroke-width="1" stroke-dasharray="1.2,2.6"/>
<line x1="951" y1="327" x2="951.00" y2="143.50" stroke="#8c8c8c" stroke-width="1" stroke-dasharray="1.2,2.6"/>
<line x1="951" y1="327" x2="821.25" y2="197.25" stroke="#8c8c8c" stroke-width="1" stroke-dasharray="1.2,2.6"/>
<line x1="951" y1="327" x2="767.50" y2="327.00" stroke="#8c8c8c" stroke-width="1" stroke-dasharray="1.2,2.6"/>
<line x1="951" y1="327" x2="821.25" y2="456.75" stroke="#8c8c8c" stroke-width="1" stroke-dasharray="1.2,2.6"/>
<line x1="951" y1="327" x2="951.00" y2="510.50" stroke="#8c8c8c" stroke-width="1" stroke-dasharray="1.2,2.6"/>
<line x1="951" y1="327" x2="1080.75" y2="456.75" stroke="#8c8c8c" stroke-width="1" stroke-dasharray="1.2,2.6"/>
<circle cx="951" cy="327" r="183.5" fill="none" stroke="#333" stroke-width="1.3"/>
<path d="M1104.5,327.0 L1098.6,287.5 L1081.2,251.9 L1050.3,227.7 L1014.5,216.9 L977.5,228.0 L951.0,265.3 L936.7,273.7 L905.9,248.8 L865.2,241.2 L832.7,258.7 L810.1,289.2 L799.6,327.0 L805.0,366.1 L822.6,401.2 L851.9,426.1 L888.3,435.6 L924.5,425.9 L951.0,388.3 L966.7,385.4 L998.0,408.4 L1036.1,412.1 L1071.4,396.5 L1094.1,365.3" fill="none" stroke="#0000ee" stroke-width="1.6" stroke-linejoin="round"/>
<line x1="1094.1" y1="365.3" x2="1104.5" y2="327.0" stroke="#3333ff" stroke-width="1"/>
<circle cx="1104.5" cy="327.0" r="3.2" fill="#0000d0" stroke="#00006a" stroke-width="0.9"/>
<circle cx="1098.6" cy="287.5" r="3.2" fill="#0000d0" stroke="#00006a" stroke-width="0.9"/>
<circle cx="1081.2" cy="251.9" r="3.2" fill="#0000d0" stroke="#00006a" stroke-width="0.9"/>
<circle cx="1050.3" cy="227.7" r="3.2" fill="#0000d0" stroke="#00006a" stroke-width="0.9"/>
<circle cx="1014.5" cy="216.9" r="3.2" fill="#0000d0" stroke="#00006a" stroke-width="0.9"/>
<circle cx="977.5" cy="228.0" r="3.2" fill="#0000d0" stroke="#00006a" stroke-width="0.9"/>
<circle cx="951.0" cy="265.3" r="3.2" fill="#0000d0" stroke="#00006a" stroke-width="0.9"/>
<circle cx="936.7" cy="273.7" r="3.2" fill="#0000d0" stroke="#00006a" stroke-width="0.9"/>
<circle cx="905.9" cy="248.8" r="3.2" fill="#0000d0" stroke="#00006a" stroke-width="0.9"/>
<circle cx="865.2" cy="241.2" r="3.2" fill="#0000d0" stroke="#00006a" stroke-width="0.9"/>
<circle cx="832.7" cy="258.7" r="3.2" fill="#0000d0" stroke="#00006a" stroke-width="0.9"/>
<circle cx="810.1" cy="289.2" r="3.2" fill="#0000d0" stroke="#00006a" stroke-width="0.9"/>
<circle cx="799.6" cy="327.0" r="3.2" fill="#0000d0" stroke="#00006a" stroke-width="0.9"/>
<circle cx="805.0" cy="366.1" r="3.2" fill="#0000d0" stroke="#00006a" stroke-width="0.9"/>
<circle cx="822.6" cy="401.2" r="3.2" fill="#0000d0" stroke="#00006a" stroke-width="0.9"/>
<circle cx="851.9" cy="426.1" r="3.2" fill="#0000d0" stroke="#00006a" stroke-width="0.9"/>
<circle cx="888.3" cy="435.6" r="3.2" fill="#0000d0" stroke="#00006a" stroke-width="0.9"/>
<circle cx="924.5" cy="425.9" r="3.2" fill="#0000d0" stroke="#00006a" stroke-width="0.9"/>
<circle cx="951.0" cy="388.3" r="3.2" fill="#0000d0" stroke="#00006a" stroke-width="0.9"/>
<circle cx="966.7" cy="385.4" r="3.2" fill="#0000d0" stroke="#00006a" stroke-width="0.9"/>
<circle cx="998.0" cy="408.4" r="3.2" fill="#0000d0" stroke="#00006a" stroke-width="0.9"/>
<circle cx="1036.1" cy="412.1" r="3.2" fill="#0000d0" stroke="#00006a" stroke-width="0.9"/>
<circle cx="1071.4" cy="396.5" r="3.2" fill="#0000d0" stroke="#00006a" stroke-width="0.9"/>
<circle cx="1094.1" cy="365.3" r="3.2" fill="#0000d0" stroke="#00006a" stroke-width="0.9"/>
<text x="1152" y="331" text-anchor="middle">0°</text>
<text x="1094" y="187" text-anchor="middle">45°</text>
<text x="951" y="128" text-anchor="middle">90°</text>
<text x="808" y="187" text-anchor="middle">135°</text>
<text x="749" y="330" text-anchor="middle">180°</text>
<text x="808" y="472" text-anchor="middle">225°</text>
<text x="951" y="532" text-anchor="middle">270°</text>
<text x="1093" y="472" text-anchor="middle">315°</text>
<text x="952.0" y="325.0">-25</text>
<text x="980.3" y="313.3">-20</text>
<text x="1008.5" y="301.6">-15</text>
<text x="1036.8" y="289.9">-10</text>
<text x="1065.0" y="278.2">-5</text>
<text x="1093.3" y="266.5">0</text>
  </svg>
  <div id="t_enter" class="a tx" style="left:661px;top:523px;transform:scaleX(0.935);font-size:11.5px;font-weight:bold;color:#111;white-space:nowrap">ENTER RUN NAME</div>
  <div class="a" style="left:660px;top:538px;width:258px;height:23px;background:#e6e6e6;border:1px solid #c6c6c6"></div>
  <div id="t_royer" class="a tx" style="left:665px;top:543px;transform:scaleX(0.94);font-size:12px;color:#222;white-space:nowrap">Royer r121 ploarTest</div>

  <!-- status bar tooltip -->
  <div class="a" style="left:0;top:593px;width:176px;height:15px;background:#fff;border:1px solid #333"></div>
  <div id="t_tip" class="a tx" style="left:4px;top:595px;transform:scaleX(0.923);font-size:11.5px;color:#111;white-space:nowrap">MicrophoneTest.lvproj/My Computer</div>
</div>
</body></html>
